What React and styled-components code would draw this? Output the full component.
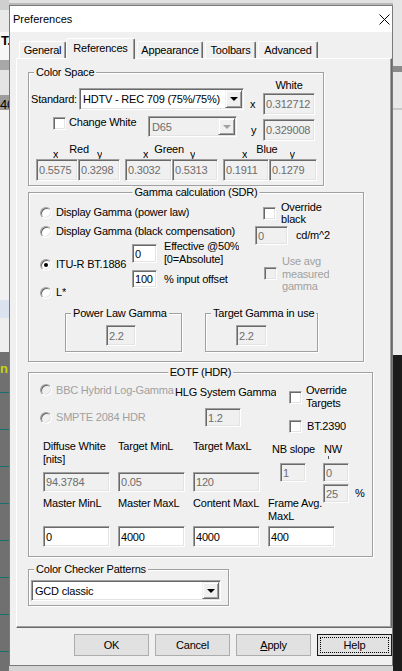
import React from 'react'
import styled, { createGlobalStyle } from 'styled-components'

const GlobalStyle = createGlobalStyle`
  html, body {
    margin: 0;
    padding: 0;
    background: #d4d4d4;
  }
  body {
    font-family: 'Liberation Sans', Arial, sans-serif;
    font-size: 11px;
    letter-spacing: -0.2px;
    color: #000;
  }
`

const Desktop = styled.div`
  width: 402px;
  height: 671px;
  overflow: hidden;
  display: grid;
  grid-template-columns: 9px 384px 9px;
  align-items: start;
  background: linear-gradient(#e2e2e2 0 3px, #b9b9b9 3px 5px, #d4d4d4 5px);
`

const LeftStrip = styled.div`
  height: 671px;
  overflow: hidden;
  display: flex;
  flex-direction: column;
  background: linear-gradient(
    to bottom,
    #cfcfcf 0 10px,
    #e9e9e9 10px 32px,
    #f6f6f6 32px 60px,
    #a8a8a8 60px 70px,
    #e4e4e4 70px 95px,
    #9c9c9c 95px 110px,
    #f1f1f1 110px 300px,
    #dbe4ee 300px 318px,
    #eeeeee 318px 352px
  );
`

const StripText = styled.span`
  display: block;
  margin: ${p => p.$mt}px 0 0 ${p => p.$ml || 0}px;
  font-size: 13px;
  font-weight: ${p => (p.$bold ? 700 : 400)};
  line-height: 14px;
  color: ${p => p.$color || '#000'};
  white-space: nowrap;
`

const DarkArea = styled.div`
  margin-top: auto;
  height: 319px;
  display: flex;
  flex-direction: column;
  background: repeating-linear-gradient(#707070 0 36px, #17706d 36px 37px);
  background-position: 0 4px;
`

const RightStrip = styled.div`
  height: 671px;
  background: linear-gradient(
    to bottom,
    #e6e6e6 0 66px,
    #8b8b8b 66px 72px,
    #e8e8e8 72px 108px,
    #c9c9c9 108px 110px,
    #ececec 110px 355px,
    #1c1c1c 355px
  );
`

const Dialog = styled.div`
  box-sizing: border-box;
  width: 384px;
  height: 661px;
  margin-top: 5px;
  border: 1px solid #7a7a7a;
  background: #f0f0f0;
  display: flex;
  flex-direction: column;
`

const TitleBar = styled.div`
  flex: none;
  height: 26px;
  background: #fff;
  display: flex;
  align-items: center;
  justify-content: space-between;
  padding: 0 2px 0 3px;
  font-size: 11px;
  letter-spacing: 0;
`

const Body = styled.div`
  display: flex;
  flex-direction: column;
  padding: 6px 0 0 6px;
`

const TabStrip = styled.div`
  display: flex;
  align-items: flex-end;
  height: 21px;
  margin: 0 0 -1px 3px;
  position: relative;
  z-index: 1;
`

const Tab = styled.div`
  box-sizing: border-box;
  flex: none;
  width: ${p => p.$w}px;
  height: ${p => (p.$on ? 21 : 17)}px;
  margin: 0 0 ${p => (p.$on ? 0 : 1)}px ${p => p.$ml || 0}px;
  padding-bottom: ${p => (p.$on ? 3 : 0)}px;
  display: flex;
  align-items: center;
  justify-content: center;
  background: #f0f0f0;
  border: 1px solid;
  border-bottom: none;
  border-color: #fff #696969 transparent #fff;
  box-shadow: inset -1px 0 0 #a0a0a0;
  border-radius: 2px 2px 0 0;
`

const Pane = styled.div`
  box-sizing: border-box;
  width: 376px;
  height: 570px;
  padding: 13px 0 0 11px;
  border: 1px solid;
  border-color: #fff #696969 #696969 #fff;
  box-shadow: inset -1px -1px 0 #a0a0a0;
  display: flex;
  flex-direction: column;
  align-items: flex-start;
`

const Group = styled.div`
  position: relative;
  box-sizing: border-box;
  flex: none;
  width: ${p => p.$w}px;
  height: ${p => p.$h}px;
  margin: ${p => p.$mt || 0}px 0 0 ${p => p.$ml || 0}px;
  padding: ${p => p.$pad || '0'};
  border: 1px solid #a0a0a0;
  box-shadow: inset 1px 1px 0 #fff, 1px 1px 0 #fff;
  display: flex;
  flex-direction: column;
`

const Caption = styled.span`
  position: absolute;
  top: -7px;
  left: ${p => (p.$center ? '50%' : '5px')};
  transform: ${p => (p.$center ? 'translateX(-50%)' : 'none')};
  padding: 0 2px;
  background: #f0f0f0;
  line-height: 13px;
  white-space: nowrap;
`

const Row = styled.div`
  display: flex;
  align-items: ${p => p.$align || 'center'};
  margin: ${p => p.$mt || 0}px 0 0 ${p => p.$ml || 0}px;
`

const Col = styled.div`
  flex: none;
  display: flex;
  flex-direction: column;
  width: ${p => (p.$w ? `${p.$w}px` : 'auto')};
  margin: ${p => p.$mt || 0}px 0 0 ${p => p.$ml || 0}px;
`

const Text = styled.span`
  display: block;
  flex: none;
  box-sizing: border-box;
  width: ${p => (p.$w ? `${p.$w}px` : 'auto')};
  height: ${p => (p.$h ? `${p.$h}px` : 'auto')};
  margin: ${p => p.$mt || 0}px 0 0 ${p => p.$ml || 0}px;
  line-height: ${p => p.$lh || 13}px;
  text-align: ${p => (p.$center ? 'center' : 'left')};
  color: ${p => (p.$off ? '#a0a0a0' : '#000')};
  white-space: nowrap;
  overflow: hidden;
`

const sunken = `
  border: 1px solid;
  border-color: #a0a0a0 #fff #fff #a0a0a0;
  box-shadow: inset 1px 1px 0 #696969, inset -1px -1px 0 #e3e3e3;
`

const Edit = styled.div`
  box-sizing: border-box;
  flex: none;
  width: ${p => p.$w}px;
  height: ${p => p.$h || 21}px;
  margin: ${p => p.$mt || 0}px 0 0 ${p => p.$ml || 0}px;
  ${sunken}
  background: ${p => (p.$off ? '#f0f0f0' : '#fff')};
  color: ${p => (p.$off ? '#6d6d6d' : '#000')};
  padding-left: 2px;
  display: flex;
  align-items: center;
  white-space: nowrap;
  overflow: hidden;
`

const Combo = styled.div`
  box-sizing: border-box;
  flex: none;
  width: ${p => p.$w}px;
  height: ${p => p.$h}px;
  ${sunken}
  background: ${p => (p.$off ? '#f0f0f0' : '#fff')};
  color: ${p => (p.$off ? '#6d6d6d' : '#000')};
  padding: 0 1px 0 3px;
  display: flex;
  align-items: center;
  justify-content: space-between;
  white-space: nowrap;
`

const DropBtn = styled.span`
  box-sizing: border-box;
  flex: none;
  width: 17px;
  height: ${p => p.$h || 17}px;
  display: flex;
  align-items: center;
  justify-content: center;
  background: #f0f0f0;
  border: 1px solid;
  border-color: #f0f0f0 #696969 #696969 #f0f0f0;
  box-shadow: inset 1px 1px 0 #fff, inset -1px -1px 0 #a0a0a0;
  &::after {
    content: '';
    border-left: 4px solid transparent;
    border-right: 4px solid transparent;
    border-top: 4px solid ${p => (p.$off ? '#a0a0a0' : '#000')};
  }
`

const Radio = styled.span`
  box-sizing: border-box;
  flex: none;
  width: 12px;
  height: 12px;
  margin: ${p => p.$mt || 0}px 0 0 0;
  border-radius: 50%;
  ${sunken}
  background: ${p => (p.$off ? '#f0f0f0' : '#fff')};
  display: flex;
  align-items: center;
  justify-content: center;
  &::after {
    content: '';
    display: ${p => (p.$on ? 'block' : 'none')};
    width: 4px;
    height: 4px;
    border-radius: 50%;
    background: #000;
  }
`

const Check = styled.span`
  box-sizing: border-box;
  flex: none;
  width: 13px;
  height: 13px;
  margin: ${p => p.$mt || 0}px 0 0 0;
  ${sunken}
  background: ${p => (p.$off ? '#f0f0f0' : '#fff')};
`

const Axis = styled.span`
  flex: none;
  width: 15px;
  padding-left: ${p => p.$pl || 2}px;
  box-sizing: border-box;
  line-height: 13px;
`

const HdrGrid = styled.div`
  display: grid;
  grid-template-columns: 75px 75px 75px 55px 50px;
  row-gap: 3px;
  margin: 7px 0 0 3px;
`

const Tick = styled.span`
  display: block;
  width: 1px;
  height: 3px;
  margin: 0 0 0 5px;
  background: #555;
`

const WideCell = styled.div`
  grid-column: span ${p => p.$span || 1};
`

const ButtonRow = styled.div`
  display: flex;
  justify-content: flex-end;
  gap: 6px;
  margin-top: 6px;
`

const Btn = styled.div`
  box-sizing: border-box;
  width: 75px;
  height: 22px;
  display: flex;
  align-items: center;
  justify-content: center;
  background: #e1e1e1;
  border: 1px solid ${p => (p.$focus ? '#1a1a1a' : '#adadad')};
  outline: ${p => (p.$focus ? '1px dotted #000' : 'none')};
  outline-offset: -4px;
  u {
    text-decoration: underline;
  }
`

function CloseIcon() {
  return (
    <svg width="11" height="11" viewBox="0 0 11 11">
      <path d="M0.5 0.5 L10.5 10.5 M10.5 0.5 L0.5 10.5" stroke="#000" strokeWidth="1" />
    </svg>
  )
}

function Pair({ name, xs, ys, wx, wy, xl, nl, yl, ml }) {
  return (
    <Col $ml={ml}>
      <Row $align="flex-start" style={{ height: 16 }}>
        <Text $mt={5} $ml={xl}>x</Text>
        <Text $ml={nl}>{name}</Text>
        <Text $mt={5} $ml={yl}>y</Text>
      </Row>
      <Row>
        <Edit $off $w={wx} $h={22}>{xs}</Edit>
        <Edit $off $w={wy} $h={22}>{ys}</Edit>
      </Row>
    </Col>
  )
}

function ColorSpace() {
  return (
    <Group $w={296} $h={114} $pad="6px 0 0 2px">
      <Caption>Color Space</Caption>
      <Row $align="flex-start">
        <Col $mt={9}>
          <Row>
            <Text $w={48}>Standard:</Text>
            <Combo $w={165} $h={22}>
              <span>HDTV - REC 709 (75%/75%)</span>
              <DropBtn $h={18} />
            </Combo>
          </Row>
          <Row $align="flex-start" $mt={6} $ml={22}>
            <Check $mt={1} />
            <Text $ml={3} $w={79}>Change White</Text>
            <Combo $off $w={89} $h={21}>
              <span>D65</span>
              <DropBtn $off $h={17} />
            </Combo>
          </Row>
        </Col>
        <Col $ml={4}>
          <Text $ml={15} $w={52} $center>White</Text>
          <Row $mt={1}>
            <Axis>x</Axis>
            <Edit $off $w={52} $h={22}>0.312712</Edit>
          </Row>
          <Row $mt={4}>
            <Axis $pl={3}>y</Axis>
            <Edit $off $w={52} $h={22}>0.329008</Edit>
          </Row>
        </Col>
      </Row>
      <Row $align="flex-start" $mt={2} $ml={5}>
        <Pair name="Red" xs="0.5575" ys="0.3298" wx={42} wy={42} xl={17} nl={11} yl={8} />
        <Pair name="Green" xs="0.3032" ys="0.5313" wx={47} wy={46} xl={18} nl={6} yl={6} ml={5} />
        <Pair name="Blue" xs="0.1911" ys="0.1279" wx={46} wy={48} xl={19} nl={9} yl={12} ml={5} />
      </Row>
    </Group>
  )
}

function Gamma() {
  return (
    <Group $w={336} $h={170} $mt={6} $pad="13px 0 0 11px">
      <Caption $center>Gamma calculation (SDR)</Caption>
      <Row $align="flex-start">
        <Col $w={215}>
          <Row>
            <Radio />
            <Text $ml={4}>Display Gamma (power law)</Text>
          </Row>
          <Row $mt={6}>
            <Radio />
            <Text $ml={4}>Display Gamma (black compensation)</Text>
          </Row>
          <Row $align="flex-start" $mt={6}>
            <Radio $on $mt={15} />
            <Text $ml={4} $mt={14} $w={76}>ITU-R BT.1886</Text>
            <Col>
              <Edit $w={25} $h={19}>0</Edit>
              <Edit $w={25} $h={18} $mt={7}>100</Edit>
            </Col>
            <Col $ml={7} $mt={-4}>
              <Text>Effective @50%<br />[0=Absolute]</Text>
              <Text $mt={7}>% input offset</Text>
            </Col>
          </Row>
          <Row $mt={-2}>
            <Radio />
            <Text $ml={4}>L*</Text>
          </Row>
        </Col>
        <Col $mt={-5}>
          <Row $ml={8}>
            <Check />
            <Text $ml={5} $lh={12}>Override<br />black</Text>
          </Row>
          <Row $mt={1}>
            <Edit $off $w={33} $h={19}>0</Edit>
            <Text $ml={8}>cd/m^2</Text>
          </Row>
          <Row $mt={10} $ml={9}>
            <Check $off />
            <Text $off $ml={5} $lh={12.5}>Use avg<br />measured<br />gamma</Text>
          </Row>
        </Col>
      </Row>
      <Row $align="flex-start" $mt={14} $ml={25}>
        <Group $w={117} $h={39} $pad="11px 0 0 40px">
          <Caption>Power Law Gamma</Caption>
          <Edit $off $w={30} $h={21}>2.2</Edit>
        </Group>
        <Group $w={113} $h={39} $ml={23} $pad="11px 0 0 30px">
          <Caption>Target Gamma in use</Caption>
          <Edit $off $w={31} $h={21}>2.2</Edit>
        </Group>
      </Row>
    </Group>
  )
}

const lumaColumns = [
  { top: ['Diffuse White', '[nits]'], ref: '94.3784', bottom: 'Master MinL', value: '0' },
  { top: ['Target MinL'], ref: '0.05', bottom: 'Master MaxL', value: '4000' },
  { top: ['Target MaxL'], ref: '120', bottom: 'Content MaxL', value: '4000' },
]

function Eotf() {
  return (
    <Group $w={345} $h={185} $mt={10} $pad="11px 0 0 11px">
      <Caption $center>EOTF (HDR)</Caption>
      <Row $align="flex-start">
        <Col $w={249}>
          <Row $align="flex-start">
            <Radio $off />
            <Text $off $ml={4} $w={119}>BBC Hybrid Log-Gamma</Text>
            <Text $mt={2}>HLG System Gamma</Text>
          </Row>
          <Row $mt={9}>
            <Radio $off />
            <Text $off $ml={4} $w={149}>SMPTE 2084 HDR</Text>
            <Edit $off $w={36} $h={19}>1.2</Edit>
          </Row>
        </Col>
        <Col>
          <Row>
            <Check />
            <Text $ml={4}>Override<br />Targets</Text>
          </Row>
          <Row $mt={10}>
            <Check />
            <Text $ml={5}>BT.2390</Text>
          </Row>
        </Col>
      </Row>
      <HdrGrid>
        {lumaColumns.map(c => (
          <Col key={c.bottom}>
            <Text $h={26}>
              {c.top[0]}
              {c.top[1] && <br />}
              {c.top[1]}
            </Text>
            <Edit $off $w={67} $h={20} $mt={6}>{c.ref}</Edit>
            <Text $h={26} $mt={5}>{c.bottom}</Text>
          </Col>
        ))}
        <Col>
          <Text $mt={3} $ml={4}>NB slope</Text>
          <Edit $off $w={26} $h={19} $mt={7} $ml={12}>1</Edit>
          <Text $h={26} $mt={15}>Frame Avg.<br />MaxL</Text>
        </Col>
        <Col>
          <Text $mt={3} $ml={1}>NW</Text>
          <Tick />
          <Edit $off $w={26} $h={19} $mt={4}>0</Edit>
          <Row $mt={2}>
            <Edit $off $w={26} $h={19}>25</Edit>
            <Text $ml={6}>%</Text>
          </Row>
        </Col>
        {lumaColumns.map(c => (
          <Edit key={c.bottom} $w={67} $h={21}>{c.value}</Edit>
        ))}
        <WideCell $span={2}>
          <Edit $w={67} $h={21}>400</Edit>
        </WideCell>
      </HdrGrid>
    </Group>
  )
}

function Checker() {
  return (
    <Group $w={201} $h={37} $mt={12} $pad="10px 0 0 2px">
      <Caption>Color Checker Patterns</Caption>
      <Combo $w={190} $h={21}>
        <span>GCD classic</span>
        <DropBtn $h={17} />
      </Combo>
    </Group>
  )
}

const tabs = [
  { label: 'General', w: 47 },
  { label: 'References', w: 69, on: true },
  { label: 'Appearance', w: 66, ml: 2 },
  { label: 'Toolbars', w: 51, ml: 2 },
  { label: 'Advanced', w: 60, ml: 2 },
]

export default function App() {
  return (
    <>
      <GlobalStyle />
      <Desktop>
        <LeftStrip>
          <StripText $mt={34} $ml={1} $bold>T.</StripText>
          <StripText $mt={50} $ml={0}>40</StripText>
          <DarkArea>
            <StripText $mt={10} $ml={0} $bold $color="#c8d400">n</StripText>
          </DarkArea>
        </LeftStrip>
        <Dialog>
          <TitleBar>
            <span>Preferences</span>
            <CloseIcon />
          </TitleBar>
          <Body>
            <TabStrip>
              {tabs.map(t => (
                <Tab key={t.label} $w={t.w} $on={t.on} $ml={t.ml}>
                  {t.label}
                </Tab>
              ))}
            </TabStrip>
            <Pane>
              <ColorSpace />
              <Gamma />
              <Eotf />
              <Checker />
            </Pane>
            <ButtonRow>
              <Btn>OK</Btn>
              <Btn>Cancel</Btn>
              <Btn>
                <span><u>A</u>pply</span>
              </Btn>
              <Btn $focus>Help</Btn>
            </ButtonRow>
          </Body>
        </Dialog>
        <RightStrip />
      </Desktop>
    </>
  )
}
